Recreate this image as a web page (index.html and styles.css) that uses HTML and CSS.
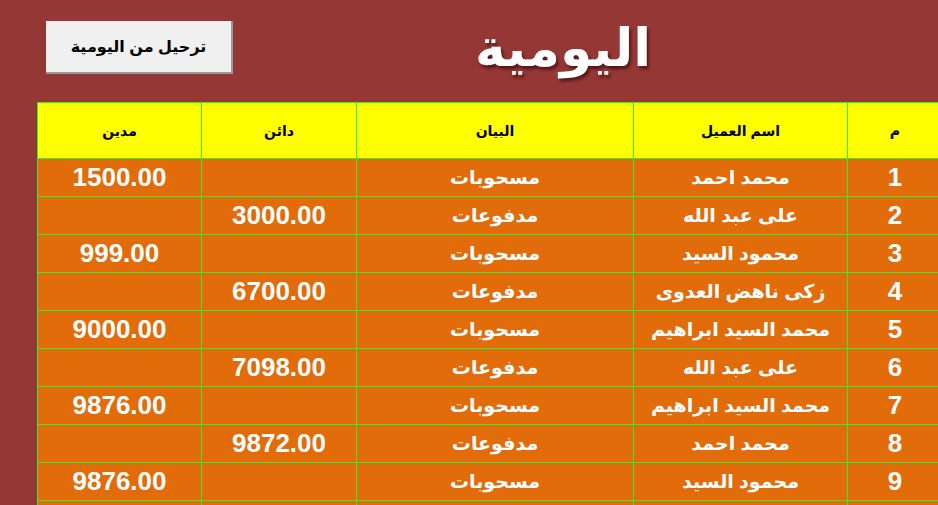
FILE: index.html
```html
<!DOCTYPE html>
<html lang="ar">
<head>
<meta charset="utf-8">
<title>اليومية</title>
<link rel="stylesheet" href="styles.css">
</head>
<body>
<div class="page">
  <header class="top">
    <button class="btn" type="button">ترحيل من اليومية</button>
    <h1 class="title">اليومية</h1>
  </header>
  <table class="grid" dir="rtl">
    <colgroup>
      <col class="c-no"><col class="c-name"><col class="c-desc"><col class="c-cr"><col class="c-dr">
    </colgroup>
    <thead>
      <tr><th>م</th><th>اسم العميل</th><th>البيان</th><th>دائن</th><th>مدين</th></tr>
    </thead>
    <tbody>
      <tr><td class="num">1</td><td>محمد احمد</td><td>مسحوبات</td><td class="num"></td><td class="num">1500.00</td></tr>
      <tr><td class="num">2</td><td>على عبد الله</td><td>مدفوعات</td><td class="num">3000.00</td><td class="num"></td></tr>
      <tr><td class="num">3</td><td>محمود السيد</td><td>مسحوبات</td><td class="num"></td><td class="num">999.00</td></tr>
      <tr><td class="num">4</td><td>زكى ناهض العدوى</td><td>مدفوعات</td><td class="num">6700.00</td><td class="num"></td></tr>
      <tr><td class="num">5</td><td>محمد السيد ابراهيم</td><td>مسحوبات</td><td class="num"></td><td class="num">9000.00</td></tr>
      <tr><td class="num">6</td><td>على عبد الله</td><td>مدفوعات</td><td class="num">7098.00</td><td class="num"></td></tr>
      <tr><td class="num">7</td><td>محمد السيد ابراهيم</td><td>مسحوبات</td><td class="num"></td><td class="num">9876.00</td></tr>
      <tr><td class="num">8</td><td>محمد احمد</td><td>مدفوعات</td><td class="num">9872.00</td><td class="num"></td></tr>
      <tr><td class="num">9</td><td>محمود السيد</td><td>مسحوبات</td><td class="num"></td><td class="num">9876.00</td></tr>
      <tr><td class="num"></td><td></td><td></td><td class="num"></td><td class="num"></td></tr>
    </tbody>
  </table>
</div>
</body>
</html>
```

FILE: styles.css
```css
html, body {
  margin: 0;
  padding: 0;
}
body {
  background: #953735;
  width: 938px;
  height: 505px;
  overflow: hidden;
  font-family: "Liberation Sans", "DejaVu Sans", sans-serif;
}
.page {
  padding-left: 37px;
}
.top {
  display: flex;
  align-items: flex-start;
  height: 102px;
}
.btn {
  margin-top: 21px;
  margin-left: 9px;
  width: 187px;
  height: 53px;
  background: #f0f0f0;
  border: none;
  border-right: 2px solid #9a9a9a;
  border-bottom: 2px solid #9a9a9a;
  box-sizing: border-box;
  font-family: "Liberation Sans", "DejaVu Sans", sans-serif;
  font-size: 16px;
  font-weight: bold;
  color: #000;
  direction: rtl;
  padding: 0;
}
.title {
  margin: 0;
  margin-left: 235px;
  width: 190px;
  text-align: center;
  color: #fff;
  font-size: 52px;
  font-weight: bold;
  line-height: 96px;
  text-shadow: 2px 3px 3px rgba(60, 10, 10, 0.7);
  direction: rtl;
  white-space: nowrap;
}
.grid {
  border-collapse: separate;
  border-spacing: 0;
  border-top: 1px solid #2ef02e;
  table-layout: fixed;
  width: 905px;
}
.c-no { width: 95px; }
.c-name { width: 214px; }
.c-desc { width: 277px; }
.c-cr { width: 155px; }
.c-dr { width: 164px; }
.grid th, .grid td {
  box-sizing: border-box;
  border-left: 1px solid #2ef02e;
  border-bottom: 1px solid #2ef02e;
  text-align: center;
  padding: 0;
  overflow: hidden;
  white-space: nowrap;
}
.grid th {
  background: #ffff00;
  color: #000;
  height: 56px;
  font-size: 14px;
  font-weight: bold;
}
.grid td {
  background: #e26b0a;
  color: #fff;
  height: 38px;
  font-size: 19px;
  font-weight: bold;
}
.grid td.num {
  font-size: 26px;
}
```
